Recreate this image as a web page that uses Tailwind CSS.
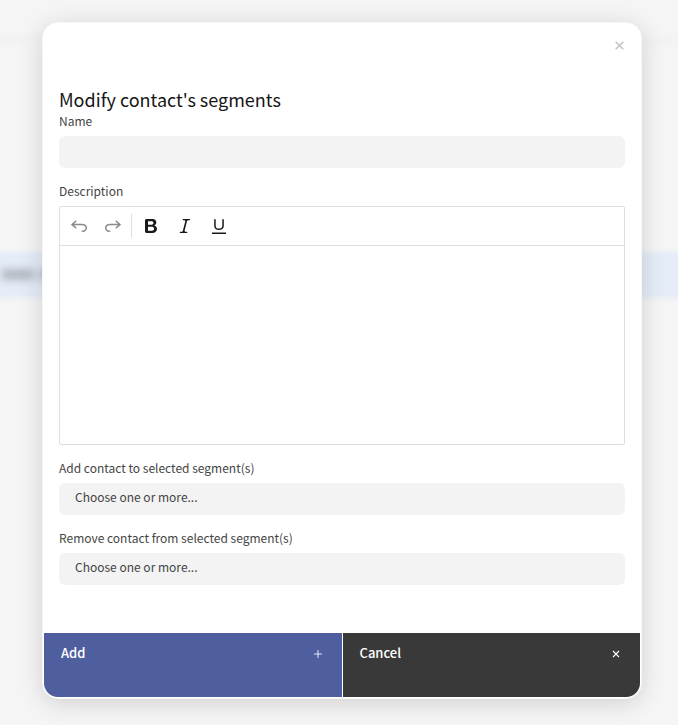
<!DOCTYPE html>
<html lang="en">

<head>
  <meta charset="UTF-8">
  <meta name="viewport" content="width=device-width, initial-scale=1.0">
  <title>Modify contact's segments</title>
  <script src="https://cdn.jsdelivr.net/npm/@tailwindcss/browser@4"></script>
</head>

<body class="relative min-h-screen overflow-x-hidden bg-[#f5f5f5] font-['Noto_Sans_CJK_SC','Noto_Sans',sans-serif] text-xs leading-[18px] text-[#444444]">
  <!-- Blurred page behind the dialog -->
  <div class="absolute inset-0 overflow-hidden" aria-hidden="true">
    <div class="absolute -inset-x-4 top-[37px] h-[6px] bg-[#f1f1f1] blur-[2px]"></div>
    <div class="absolute -inset-x-4 top-[252px] h-[46px] bg-[#e4ecf7] blur-[2px]"></div>
    <div class="absolute left-[2px] top-[270px] h-[9px] w-8 bg-[#a9adb6] blur-[4px]"></div>
    <div class="absolute left-[40px] top-[270px] h-[9px] w-8 bg-[#a9adb6] blur-[4px]"></div>
  </div>

  <main class="relative pt-[22px] pr-9 pb-6 pl-[42px]">
    <div role="dialog" aria-labelledby="modalTitle" class="rounded-2xl border border-[#f8f8f8] bg-white p-px shadow-[0_4px_24px_rgba(0,0,0,0.15)]">
      <form id="segmentForm" novalidate>
        <!-- Header -->
        <div class="flex h-16 items-start justify-end px-[11px] pt-3">
          <button type="button" aria-label="Close" class="flex size-[19px] items-center justify-center text-[#c6c6c6]">
            <svg class="size-[9px]" viewBox="0 0 9 9" fill="none" stroke="currentColor" stroke-width="1.6">
              <path d="M.7.7l7.6 7.6M8.3.7L.7 8.3" />
            </svg>
          </button>
        </div>

        <div class="flex flex-col gap-[14px] px-[15px] pb-12">
          <div>
            <h2 id="modalTitle" class="mb-[2px] text-lg leading-[22px] text-[#161616]">Modify contact's segments</h2>
            <!-- Name -->
            <label for="segmentName" class="mb-[6px] block">Name</label>
            <input type="text" id="segmentName" class="block h-8 w-full rounded-md bg-[#f3f3f3] px-4 outline-none">
          </div>

          <!-- Description -->
          <div>
            <label for="segmentDescription" class="mb-[6px] block">Description</label>
            <div class="rounded-xs border border-[#dedede]">
              <div role="toolbar" class="flex h-[39px] items-center border-b border-[#dedede] pl-[2px] text-[#1a1a1a]">
                <button type="button" aria-label="Undo" class="flex h-8 w-[34px] items-center justify-center opacity-50" disabled>
                  <svg class="size-5" viewBox="0 0 20 20" fill="currentColor">
                    <path d="m5.042 9.367 2.189 1.837a.75.75 0 0 1-.965 1.149l-3.788-3.18a.747.747 0 0 1-.21-.284.75.75 0 0 1 .17-.945L6.23 4.762a.75.75 0 1 1 .964 1.15L4.863 7.866h8.917A.75.75 0 0 1 14 7.9a4 4 0 1 1-1.477 7.718l.344-1.489a2.5 2.5 0 1 0 1.094-4.73l.008-.032H5.042z" />
                  </svg>
                </button>
                <button type="button" aria-label="Redo" class="flex h-8 w-[34px] items-center justify-center opacity-50" disabled>
                  <svg class="size-5" viewBox="0 0 20 20" fill="currentColor">
                    <path d="m14.958 9.367-2.189 1.837a.75.75 0 0 0 .965 1.149l3.788-3.18a.747.747 0 0 0 .21-.284.75.75 0 0 0-.17-.945L13.77 4.762a.75.75 0 1 0-.964 1.15l2.331 1.955H6.22A.75.75 0 0 0 6 7.9a4 4 0 1 0 1.477 7.718l-.344-1.489A2.5 2.5 0 1 1 6.039 9.4l-.008-.032h8.927z" />
                  </svg>
                </button>
                <span class="mr-[2px] ml-px h-6 w-px bg-[#dedede]"></span>
                <button type="button" aria-label="Bold" class="flex h-8 w-[34px] items-center justify-center">
                  <svg class="size-5" viewBox="0 0 20 20" fill="currentColor">
                    <path d="M10.187 17H5.773c-.637 0-1.092-.138-1.364-.415-.273-.277-.409-.718-.409-1.323V4.738c0-.617.14-1.062.419-1.332.279-.27.73-.406 1.354-.406h4.68c.69 0 1.288.041 1.793.124.506.083.96.242 1.36.478.341.197.644.447.906.75a3.262 3.262 0 0 1 .808 2.162c0 1.401-.722 2.426-2.167 3.075C15.05 10.175 16 11.315 16 13.01a3.756 3.756 0 0 1-2.296 3.504 6.1 6.1 0 0 1-1.517.377c-.571.073-1.238.11-2 .11zm-.217-6.217H7v4.087h3.069c1.977 0 2.965-.69 2.965-2.072 0-.707-.256-1.22-.768-1.537-.512-.319-1.277-.478-2.296-.478zM7 5.13v3.619h2.606c.729 0 1.292-.067 1.69-.2a1.6 1.6 0 0 0 .91-.765c.165-.267.247-.566.247-.897 0-.707-.26-1.176-.778-1.409-.519-.232-1.31-.348-2.375-.348H7z" />
                  </svg>
                </button>
                <button type="button" aria-label="Italic" class="flex h-8 w-[34px] items-center justify-center">
                  <svg class="size-5" viewBox="0 0 20 20" fill="currentColor">
                    <path d="m9.586 14.633.021.004c-.036.335.095.655.393.962.082.083.173.15.274.201h1.474a.6.6 0 1 1 0 1.2H5.304a.6.6 0 0 1 0-1.2h1.15c.474-.07.809-.182 1.005-.334.157-.122.291-.32.404-.597l2.416-9.55a1.053 1.053 0 0 0-.281-.823 1.12 1.12 0 0 0-.442-.296H8.15a.6.6 0 0 1 0-1.2h6.443a.6.6 0 1 1 0 1.2h-1.195c-.376.056-.65.155-.823.296-.215.175-.423.439-.623.79l-2.366 9.347z" />
                  </svg>
                </button>
                <button type="button" aria-label="Underline" class="flex h-8 w-[34px] items-center justify-center">
                  <svg class="size-5" viewBox="0 0 20 20" fill="currentColor">
                    <path d="M3 18v-1.5h14V18zm2.2-8V3.6c0-.4.4-.6.8-.6.3 0 .7.2.7.6v6.2c0 2 1.3 2.8 3.2 2.8 1.9 0 3.4-.9 3.4-2.9V3.6c0-.3.4-.5.8-.5.3 0 .7.2.7.5V10c0 2.7-2.2 4-4.9 4-2.6 0-4.7-1.2-4.7-4z" />
                  </svg>
                </button>
              </div>
              <textarea id="segmentDescription" class="block h-[198px] w-full resize-none px-3 py-2 outline-none"></textarea>
            </div>
          </div>

          <!-- Add to segments -->
          <div>
            <label for="addSegments" class="mb-[6px] block">Add contact to selected segment(s)</label>
            <select id="addSegments" class="block h-8 w-full appearance-none rounded-md bg-[#f3f3f3] px-4 pb-1 outline-none">
              <option>Choose one or more...</option>
            </select>
          </div>

          <!-- Remove from segments -->
          <div>
            <label for="removeSegments" class="mb-[6px] block">Remove contact from selected segment(s)</label>
            <select id="removeSegments" class="block h-8 w-full appearance-none rounded-md bg-[#f3f3f3] px-4 pb-1 outline-none">
              <option>Choose one or more...</option>
            </select>
          </div>
        </div>

        <!-- Actions -->
        <div class="flex gap-px overflow-hidden rounded-b-[14px] text-[13px] leading-5 font-medium text-white">
          <button type="submit" class="flex h-16 flex-1 items-start justify-between bg-[#4f5e9e] pt-[10px] pr-5 pl-[17px]">
            Add
            <svg class="mt-[7px] size-2" viewBox="0 0 8 8" fill="none" stroke="currentColor" stroke-opacity="0.85">
              <path d="M4 0v8M0 4h8" />
            </svg>
          </button>
          <button type="button" class="flex h-16 flex-1 items-start justify-between bg-[#393939] pt-[10px] pr-5 pl-[17px]">
            Cancel
            <svg class="mt-[7px] size-2" viewBox="0 0 8 8" fill="none" stroke="currentColor" stroke-width="1.1">
              <path d="M1 1l6 6M7 1l-6 6" />
            </svg>
          </button>
        </div>
      </form>
    </div>
  </main>
</body>

</html>
